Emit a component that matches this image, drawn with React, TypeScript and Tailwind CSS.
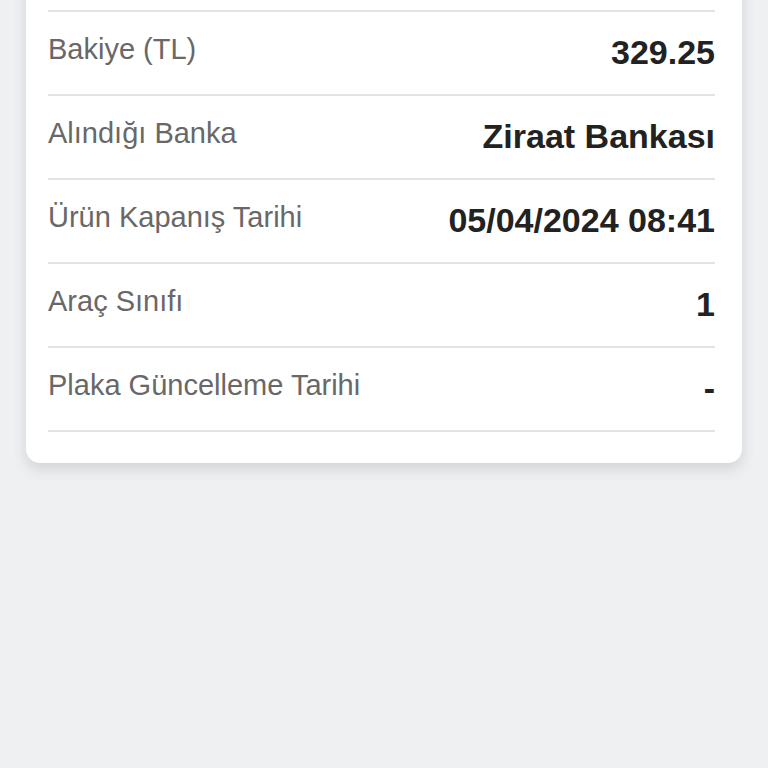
import React from "react";

const rows: { label: string; value: string }[] = [
  { label: "Bakiye (TL)", value: "329.25" },
  { label: "Alındığı Banka", value: "Ziraat Bankası" },
  { label: "Ürün Kapanış Tarihi", value: "05/04/2024 08:41" },
  { label: "Araç Sınıfı", value: "1" },
  { label: "Plaka Güncelleme Tarihi", value: "-" },
];

export default function App() {
  return (
    <div
      className="min-h-[768px] w-full bg-[#eff0f2] px-[26px] overflow-hidden"
      style={{ fontFamily: '"Liberation Sans", Arial, sans-serif' }}
    >
      <div className="-mt-[30px] rounded-[14px] bg-white pl-[22px] pr-[27px] pb-[31px] shadow-[0_6px_14px_rgba(60,64,80,0.16)]">
        <div className="h-[42px] border-b-2 border-[#e3e3e3]" />
        {rows.map((r) => (
          <div
            key={r.label}
            className="flex h-[84px] items-start justify-between border-b-2 border-[#e3e3e3]"
          >
            <div className="mt-[23px] text-[29px] leading-[29px] text-[#686868]">
              {r.label}
            </div>
            <div className="mt-[23px] text-[34px] leading-[34px] font-bold text-[#222222]">
              {r.value}
            </div>
          </div>
        ))}
      </div>
    </div>
  );
}
